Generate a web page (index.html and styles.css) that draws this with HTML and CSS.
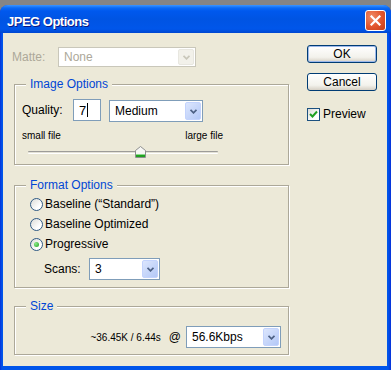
FILE: index.html
```html
<!DOCTYPE html>
<html>
    <head>
        <meta charset="utf-8">
        <title>JPEG Options</title>
        <link rel="stylesheet" href="styles.css">
    </head>
    <body>
        <div class="window">

            <div class="titlebar">
                <span class="titlebar__text">JPEG Options</span>
                <span class="titlebar__close">
                    <svg width="11" height="11" viewBox="0 0 11 11"><path d="M1.5 1.5 L9.5 9.5 M9.5 1.5 L1.5 9.5" stroke="#fff" stroke-width="2.2" stroke-linecap="square"/></svg>
                </span>
            </div>

            <div class="window__body">
                <div class="main">

                    <div class="matte">
                        <span class="matte__label">Matte:</span>
                        <div class="select select--disabled select--matte">
                            <span class="select__value">None</span>
                            <span class="select__arrow"><svg width="7" height="5" viewBox="0 0 7 5"><polyline points="0.5,0.8 3.5,3.8 6.5,0.8" fill="none" stroke="#C9C7BA" stroke-width="1.8"/></svg></span>
                        </div>
                    </div>

                    <fieldset class="group group--image">
                        <legend class="group__legend">Image Options</legend>
                        <div class="quality">
                            <span class="quality__label">Quality:</span>
                            <div class="textbox"><span>7</span><span class="textbox__caret"></span></div>
                            <div class="select select--quality">
                                <span class="select__value">Medium</span>
                                <span class="select__arrow"><svg width="7" height="5" viewBox="0 0 7 5"><polyline points="0.5,0.8 3.5,3.8 6.5,0.8" fill="none" stroke="#4D6185" stroke-width="1.8"/></svg></span>
                            </div>
                        </div>
                        <div class="slider__labels">
                            <span>small file</span>
                            <span>large file</span>
                        </div>
                        <div class="slider">
                            <div class="slider__track"></div>
                            <svg class="slider__thumb" width="11" height="12" viewBox="0 0 11 12">
                                <path d="M0.5 4.5 L5.5 0.5 L10.5 4.5 L10.5 11.5 L0.5 11.5 Z" fill="#F7F7F4" stroke="#8E8F8F"/>
                                <rect x="1" y="9" width="9" height="2" fill="#21A121"/>
                                <rect x="1" y="8" width="9" height="1" fill="#8CD98C"/>
                            </svg>
                        </div>
                    </fieldset>

                    <fieldset class="group group--format">
                        <legend class="group__legend">Format Options</legend>
                        <div class="radios">
                            <label class="radio"><span class="radio__dot"></span>Baseline (“Standard”)</label>
                            <label class="radio"><span class="radio__dot"></span>Baseline Optimized</label>
                            <label class="radio radio--checked"><span class="radio__dot"></span>Progressive</label>
                        </div>
                        <div class="scans">
                            <span class="scans__label">Scans:</span>
                            <div class="select select--scans">
                                <span class="select__value">3</span>
                                <span class="select__arrow"><svg width="7" height="5" viewBox="0 0 7 5"><polyline points="0.5,0.8 3.5,3.8 6.5,0.8" fill="none" stroke="#4D6185" stroke-width="1.8"/></svg></span>
                            </div>
                        </div>
                    </fieldset>

                    <fieldset class="group group--size">
                        <legend class="group__legend">Size</legend>
                        <div class="size">
                            <span class="size__info">~36.45K / 6.44s</span>
                            <span class="size__at">@</span>
                            <div class="select select--speed">
                                <span class="select__value">56.6Kbps</span>
                                <span class="select__arrow"><svg width="7" height="5" viewBox="0 0 7 5"><polyline points="0.5,0.8 3.5,3.8 6.5,0.8" fill="none" stroke="#4D6185" stroke-width="1.8"/></svg></span>
                            </div>
                        </div>
                    </fieldset>

                </div>

                <div class="side">
                    <div class="button button--default">OK</div>
                    <div class="button">Cancel</div>
                    <label class="check">
                        <span class="check__box"><svg width="9" height="9" viewBox="0 0 9 9"><polyline points="1,4 3.5,6.5 8,1.5" fill="none" stroke="#21A121" stroke-width="2"/></svg></span>
                        Preview
                    </label>
                </div>
            </div>

        </div>
    </body>
</html>
```

FILE: styles.css
```css
* {
    box-sizing: border-box;
}

html, body {
    margin: 0;
    padding: 0;
    background-color: #858585;
    font-family: "Liberation Sans", Arial, sans-serif;
    font-size: 12px;
    color: #000;
}

.window {
    width: 391px;
    height: 365px;
    margin-top: 5px;
    background: linear-gradient(90deg, #0831D9 0px, #0055EA 2px, #0055EA 388px, #0831D9 391px);
    border-radius: 8px 8px 0 0;
    display: flex;
    flex-direction: column;
    overflow: hidden;
}

.titlebar {
    height: 28px;
    padding: 5px 5px 0 7px;
    display: flex;
    justify-content: space-between;
    align-items: flex-start;
    background: linear-gradient(180deg, #3D95FF 0px, #0A6AF5 3px, #0058EE 6px, #0054E3 14px, #0056EA 24px, #0047D0 28px);
}

.titlebar__text {
    margin-top: 4px;
    color: #fff;
    font-size: 13px;
    line-height: 15px;
    font-weight: bold;
    letter-spacing: -0.5px;
    text-shadow: 1px 1px 0 #0A1883;
}

.titlebar__close {
    width: 21px;
    height: 21px;
    border: 1px solid #fff;
    border-radius: 3px;
    background: radial-gradient(circle at 30% 30%, #F08B66, #E2542C 55%, #C43D18);
    display: flex;
    align-items: center;
    justify-content: center;
}

.window__body {
    flex: 1;
    margin: 0 4px 4px 3px;
    background-color: #ECE9D8;
    display: flex;
}

.main {
    width: 303px;
    padding-left: 9px;
}

/* matte */

.matte {
    display: flex;
    align-items: center;
    margin-top: 14px;
    height: 20px;
}
.matte__label {
    width: 46px;
    color: #ACA899;
}

/* dropdowns */

.select {
    display: flex;
    height: 22px;
    border: 1px solid #7F9DB9;
    background-color: #fff;
}
.select__value {
    flex: 1;
    display: flex;
    align-items: center;
    padding-left: 5px;
}
.select__arrow {
    width: 16px;
    margin: 1px;
    border: 1px solid #C3D3FD;
    border-radius: 2px;
    background: linear-gradient(135deg, #DCE6FD, #B3C8F7);
    display: flex;
    align-items: center;
    justify-content: center;
}

.select--disabled {
    border-color: #C9C7BA;
    color: #ACA899;
}
.select--disabled .select__arrow {
    border-color: #E8E7E0;
    background: #F2F1EA;
}

.select--matte {
    width: 138px;
    height: 20px;
}
.select--quality {
    width: 94px;
    margin-top: 1px;
}
.select--scans {
    width: 71px;
}
.select--speed {
    width: 95px;
}

/* groups */

.group {
    width: 275px;
    margin: 0 0 0 2px;
    padding: 0 0 6px 7px;
    min-width: 0;
    border: 1px solid #ACA899;
    box-shadow: inset 1px 1px 0 #fff, 1px 1px 0 #fff;
}
.group__legend {
    margin-left: 4px;
    padding: 0 4px;
    line-height: 15px;
    color: #0046D5;
    background-color: #ECE9D8;
}

.group--image {
    margin-top: 10px;
}
.group--format {
    margin-top: 13px;
    padding-bottom: 7px;
}
.group--size {
    margin-top: 11px;
}

/* quality */

.quality {
    display: flex;
    align-items: flex-start;
    margin-top: 7px;
    height: 22px;
}
.quality__label {
    width: 51px;
    line-height: 22px;
}
.textbox {
    width: 28px;
    height: 22px;
    margin-right: 8px;
    border: 1px solid #7F9DB9;
    background-color: #fff;
    padding-left: 5px;
    display: flex;
    align-items: center;
    font-size: 13px;
}
.textbox__caret {
    width: 1px;
    height: 14px;
    margin-left: 1px;
    background-color: #000;
}

/* slider */

.slider__labels {
    width: 201px;
    margin-top: 9px;
    display: flex;
    justify-content: space-between;
    font-size: 10px;
    line-height: 12px;
}

.slider {
    position: relative;
    width: 190px;
    height: 12px;
    margin: 4px 0 0 6px;
    display: flex;
    align-items: center;
}
.slider__track {
    width: 100%;
    height: 3px;
    border-top: 1px solid #9D9C99;
    border-bottom: 1px solid #fff;
    background-color: #E3E1D6;
    border-radius: 1px;
}
.slider__thumb {
    position: absolute;
    left: 107px;
    top: 0;
}

/* radios */

.radios {
    margin-top: 1px;
}
.radio {
    display: flex;
    align-items: center;
    height: 20px;
    padding-left: 8px;
}
.radio__dot {
    width: 13px;
    height: 13px;
    margin-right: 2px;
    border: 1px solid #2F5A85;
    border-radius: 50%;
    background: linear-gradient(135deg, #DCDCD7, #fff 70%);
    display: flex;
    align-items: center;
    justify-content: center;
}
.radio--checked .radio__dot::after {
    content: "";
    width: 5px;
    height: 5px;
    border-radius: 50%;
    background: radial-gradient(circle at 35% 35%, #8CEB8A, #21A121);
}

.scans {
    display: flex;
    align-items: center;
    margin-top: 4px;
    padding-left: 22px;
}
.scans__label {
    width: 45px;
}

/* size */

.size {
    display: flex;
    align-items: center;
    justify-content: flex-end;
    margin-top: 12px;
    padding-right: 7px;
}
.size__info {
    font-size: 10px;
    margin-right: 8px;
}
.size__at {
    margin-right: 5px;
}

/* side buttons */

.side {
    padding-left: 1px;
}

.button {
    width: 70px;
    height: 18px;
    margin-top: 10px;
    border: 1px solid #003C74;
    border-radius: 3px;
    background: linear-gradient(180deg, #FFFFFF, #F3F2EC 70%, #D6D0C5);
    display: flex;
    align-items: center;
    justify-content: center;
}
.button--default {
    margin-top: 12px;
    box-shadow: inset 0 0 0 1px #9DB9EB;
}

.check {
    display: flex;
    align-items: center;
    margin-top: 16px;
}
.check__box {
    width: 13px;
    height: 13px;
    margin-right: 3px;
    border: 1px solid #1C5180;
    background: linear-gradient(135deg, #DCDCD7, #fff 70%);
    display: flex;
    align-items: center;
    justify-content: center;
}
```
